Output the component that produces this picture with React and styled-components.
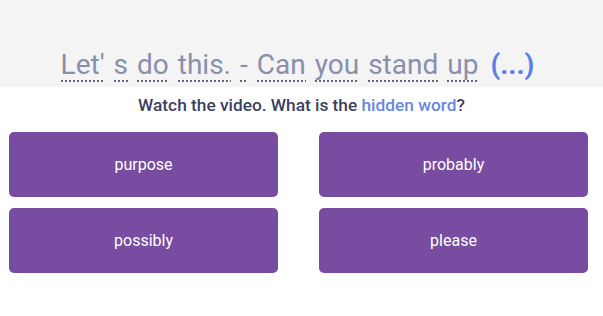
import React from "react"
import styled, { createGlobalStyle } from "styled-components"

const GlobalStyle = createGlobalStyle`
  body {
    margin: 0;
    background: #ffffff;
    font-family: Roboto, "Liberation Sans", sans-serif;
  }
`

const Page = styled.div`
  width: 603px;
  height: 316px;
  overflow: hidden;
`

const Header = styled.div`
  height: 87px;
  background: #f4f4f4;
  display: flex;
  justify-content: center;
  align-items: flex-end;
  padding-right: 8px;
  box-sizing: border-box;
`

const Sentence = styled.div`
  display: flex;
  align-items: baseline;
  gap: 9px;
  font-size: 28px;
  color: #8a8fab;
  padding-bottom: 5px;
`

const Word = styled.span`
  line-height: 32px;
  padding-bottom: 1px;
  background-image: linear-gradient(to right, #62667c 50%, transparent 50%);
  background-size: 4px 2px;
  background-repeat: repeat-x;
  background-position: 0 100%;
`

const Blank = styled.span`
  color: #5a7fe6;
  font-weight: 700;
  margin-left: 3px;
`

const Question = styled.div`
  text-align: center;
  font-size: 17.3px;
  font-weight: 500;
  color: #3b3f5e;
  margin-top: 6px;
  line-height: 24px;
`

const Hint = styled.span`
  color: #6a86e2;
`

const Answers = styled.div`
  display: grid;
  grid-template-columns: 269px 269px;
  column-gap: 41px;
  row-gap: 11px;
  padding: 0 15px 0 9px;
  margin-top: 15px;
`

const Answer = styled.button`
  height: 65px;
  border: none;
  border-radius: 5px;
  background: #784ca0;
  color: #ffffff;
  font-family: Roboto, "Liberation Sans", sans-serif;
  font-size: 16px;
  cursor: pointer;
`

const words = ["Let'", "s", "do", "this.", "-", "Can", "you", "stand", "up"]
const answers = ["purpose", "probably", "possibly", "please"]

export default function App() {
  return (
    <Page>
      <GlobalStyle />
      <Header>
        <Sentence>
          {words.map((w, i) => <Word key={i}>{w}</Word>)}
          <Blank>(...)</Blank>
        </Sentence>
      </Header>
      <Question>
        Watch the video. What is the <Hint>hidden word</Hint>?
      </Question>
      <Answers>
        {answers.map(a => <Answer key={a}>{a}</Answer>)}
      </Answers>
    </Page>
  )
}
